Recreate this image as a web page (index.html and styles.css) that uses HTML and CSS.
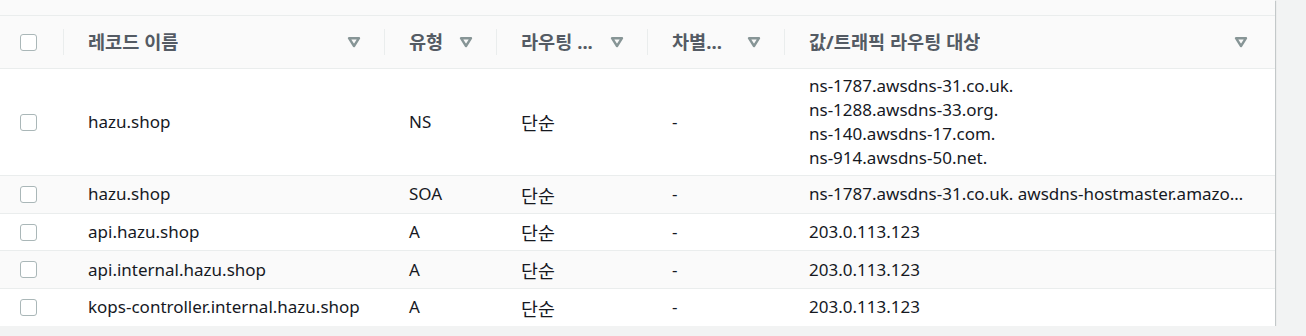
FILE: index.html
```html
<!DOCTYPE html>
<html lang="ko">
<head>
<meta charset="utf-8">
<title>레코드</title>
<link rel="stylesheet" href="styles.css">
</head>
<body>
<div class="page">
  <div class="panel">
    <div class="strip"></div>
    <table class="records">
      <colgroup>
        <col class="c-check"><col class="c-name"><col class="c-type"><col class="c-route"><col class="c-diff"><col class="c-value">
      </colgroup>
      <thead>
        <tr>
          <th class="th-check"><span class="checkbox"></span></th>
          <th><div class="th-in"><span class="th-label">레코드 이름</span><svg class="filter" viewBox="0 0 14 12" width="14" height="12"><path d="M2 2.2H12L7 10Z"/></svg></div></th>
          <th><div class="th-in"><span class="th-label">유형</span><svg class="filter" viewBox="0 0 14 12" width="14" height="12"><path d="M2 2.2H12L7 10Z"/></svg></div></th>
          <th><div class="th-in"><span class="th-label">라우팅 ...</span><svg class="filter" viewBox="0 0 14 12" width="14" height="12"><path d="M2 2.2H12L7 10Z"/></svg></div></th>
          <th><div class="th-in"><span class="th-label">차별...</span><svg class="filter" viewBox="0 0 14 12" width="14" height="12"><path d="M2 2.2H12L7 10Z"/></svg></div></th>
          <th class="th-last"><div class="th-in"><span class="th-label">값/트래픽 라우팅 대상</span><svg class="filter" viewBox="0 0 14 12" width="14" height="12"><path d="M2 2.2H12L7 10Z"/></svg></div></th>
        </tr>
      </thead>
      <tbody>
        <tr class="tall">
          <td class="td-check"><span class="checkbox"></span></td>
          <td>hazu.shop</td>
          <td>NS</td>
          <td><span class="ko">단순</span></td>
          <td>-</td>
          <td class="val multi">ns-1787.awsdns-31.co.uk.<br>ns-1288.awsdns-33.org.<br>ns-140.awsdns-17.com.<br>ns-914.awsdns-50.net.</td>
        </tr>
        <tr>
          <td class="td-check"><span class="checkbox"></span></td>
          <td>hazu.shop</td>
          <td>SOA</td>
          <td><span class="ko">단순</span></td>
          <td>-</td>
          <td class="val"><div class="trunc">ns-1787.awsdns-31.co.uk. awsdns-hostmaster.amazon.com. 1 7200 900 1209600 86400</div></td>
        </tr>
        <tr>
          <td class="td-check"><span class="checkbox"></span></td>
          <td>api.hazu.shop</td>
          <td>A</td>
          <td><span class="ko">단순</span></td>
          <td>-</td>
          <td class="val">203.0.113.123</td>
        </tr>
        <tr>
          <td class="td-check"><span class="checkbox"></span></td>
          <td>api.internal.hazu.shop</td>
          <td>A</td>
          <td><span class="ko">단순</span></td>
          <td>-</td>
          <td class="val">203.0.113.123</td>
        </tr>
        <tr>
          <td class="td-check"><span class="checkbox"></span></td>
          <td>kops-controller.internal.hazu.shop</td>
          <td>A</td>
          <td><span class="ko">단순</span></td>
          <td>-</td>
          <td class="val">203.0.113.123</td>
        </tr>
      </tbody>
    </table>
  </div>
</div>
</body>
</html>
```
FILE: styles.css
```css
* { box-sizing: border-box; }
html, body {
  margin: 0;
  padding: 0;
  background: #f2f3f3;
}
body {
  font-family: "Noto Sans", "Noto Sans CJK KR", sans-serif;
  font-size: 17px;
  line-height: 24.3px;
  color: #16191f;
}
.page {
  width: 1275px;
}
.panel {
  background: #ffffff;
  box-shadow: 0 1px 1px 0 rgba(0, 28, 36, 0.3), 1px 1px 1px 0 rgba(0, 28, 36, 0.15);
}
.strip {
  height: 16px;
  background: #fafafa;
  border-bottom: 1px solid #eaeded;
}
.records {
  width: 100%;
  border-collapse: collapse;
  table-layout: fixed;
}
.c-check { width: 63px; }
.c-name { width: 321px; }
.c-type { width: 112px; }
.c-route { width: 151px; }
.c-diff { width: 137px; }
.c-value { width: auto; }

thead th {
  background: #fafafa;
  padding: 13px 0;
  border-bottom: 1px solid #eaeded;
  text-align: left;
  font-weight: 700;
  font-size: 18.6px;
  color: #545b64;
  white-space: nowrap;
}
.th-check {
  padding-left: 20px;
  vertical-align: middle;
}
.th-check .checkbox { display: block; }
.th-in {
  height: 26px;
  border-left: 1px solid #eaeded;
  padding: 0 23px 0 24px;
  display: flex;
  align-items: center;
  justify-content: space-between;
}
.th-last .th-in { padding-right: 27px; }
.th-label {
  overflow: hidden;
}
.filter {
  flex: none;
  fill: none;
  stroke: #879596;
  stroke-width: 2.4;
  stroke-linejoin: round;
}

.checkbox {
  display: inline-block;
  width: 17px;
  height: 17px;
  border: 1.5px solid #aab7b8;
  border-radius: 3px;
  background: #ffffff;
  vertical-align: middle;
}

tbody tr {
  height: 37.6px;
}
tbody td {
  padding: 0 0 0 25px;
  border-bottom: 1px solid #eaeded;
  vertical-align: middle;
  white-space: nowrap;
}
tbody tr:nth-child(even) td {
  background: #fafafa;
}
tbody tr:last-child td {
  border-bottom: none;
}
tbody .td-check {
  padding-left: 20px;
}
tbody .td-check .checkbox {
  display: block;
}
.ko {
  display: inline-block;
  font-size: 18.4px;
  line-height: 20px;
  vertical-align: middle;
}
.val {
  padding-right: 28px;
}
.val.multi {
  padding-top: 4.5px;
  padding-bottom: 4.5px;
}
.trunc {
  overflow: hidden;
  text-overflow: ellipsis;
  white-space: nowrap;
}
```
